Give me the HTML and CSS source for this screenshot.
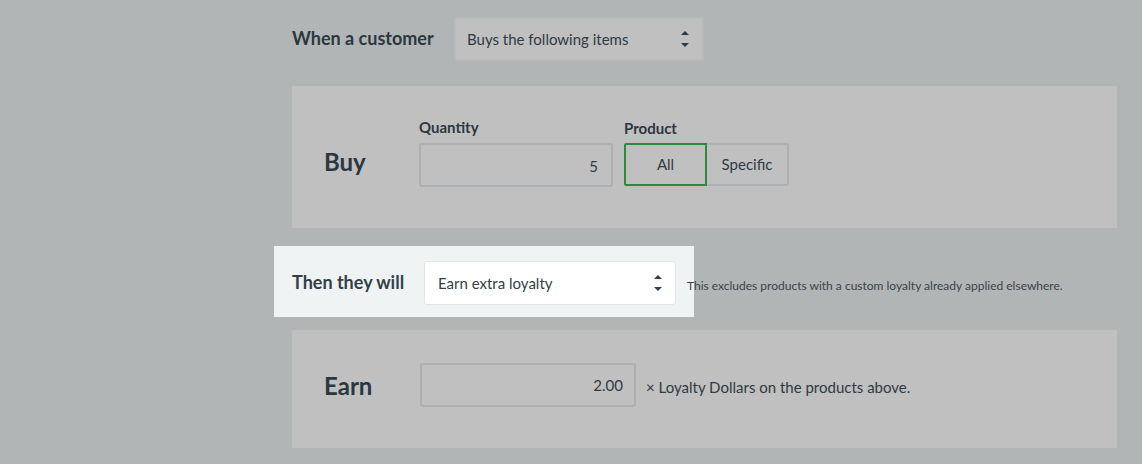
FILE: index.html
```html
<!DOCTYPE html>
<html>
<head>
<meta charset="utf-8">
<link rel="stylesheet" href="styles.css">
</head>
<body>
<div class="page">
  <div class="sidebar"></div>
  <div class="content">
    <div class="row row-when">
      <div class="row-label">When a customer</div>
      <div class="select select-dim select-when">
        <span>Buys the following items</span>
        <svg class="arrows" width="10" height="20" viewBox="0 0 10 20"><path d="M1 6 L5 2 L9 6 Z M1 14 L9 14 L5 18 Z" fill="currentColor"/></svg>
      </div>
    </div>

    <div class="panel panel-buy">
      <div class="panel-title">Buy</div>
      <div class="field field-qty">
        <div class="field-label">Quantity</div>
        <div class="input input-qty">5</div>
      </div>
      <div class="field">
        <div class="field-label">Product</div>
        <div class="toggle">
          <div class="toggle-btn active">All</div>
          <div class="toggle-btn">Specific</div>
        </div>
      </div>
    </div>

    <div class="row row-then">
      <div class="highlight"></div>
      <div class="row-label">Then they will</div>
      <div class="select select-white">
        <span>Earn extra loyalty</span>
        <svg class="arrows" width="10" height="20" viewBox="0 0 10 20"><path d="M1 6 L5 2 L9 6 Z M1 14 L9 14 L5 18 Z" fill="currentColor"/></svg>
      </div>
      <div class="help">This excludes products with a custom loyalty already applied elsewhere.</div>
    </div>

    <div class="panel panel-earn">
      <div class="panel-title">Earn</div>
      <div class="input input-earn">2.00</div>
      <div class="suffix">× Loyalty Dollars on the products above.</div>
    </div>
  </div>
</div>
</body>
</html>
```

FILE: styles.css
```css
html, body {
  margin: 0;
  padding: 0;
  background: #b1b5b6;
  font-family: Lato, "Noto Sans", sans-serif;
  color: #2d3a42;
}
.page {
  display: flex;
  height: 464px;
  overflow: hidden;
}
.sidebar {
  width: 292px;
  flex: none;
}
.content {
  width: 825px;
  padding-top: 17px;
  display: flex;
  flex-direction: column;
}
.row {
  display: flex;
  align-items: center;
  height: 44px;
}
.row-label {
  font-size: 18px;
  font-weight: 700;
  color: #2b3840;
  padding-bottom: 2px;
}
.row-when .row-label {
  width: 162px;
}
.select {
  box-sizing: border-box;
  height: 44px;
  border-radius: 3px;
  display: flex;
  align-items: center;
  justify-content: space-between;
  padding: 0 12px 0 11px;
  font-size: 15px;
}
.select-dim {
  background: #c0c0c0;
  border: 2px solid #b8babb;
}
.select-when {
  width: 250px;
  color: #2f3a42;
}
.arrows {
  color: #2d3a42;
}
.panel {
  background: #c0c0c0;
  display: flex;
  align-items: center;
}
.panel-buy {
  margin-top: 25px;
  height: 142px;
  box-sizing: border-box;
  padding: 0 0 8px 32px;
}
.panel-buy .panel-title {
  margin-top: 17px;
}
.panel-title {
  font-size: 24px;
  font-weight: 700;
  color: #2b3840;
  width: 95px;
}
.field {
  display: flex;
  flex-direction: column;
}
.field-qty {
  margin-right: 11px;
}
.field-label {
  font-size: 15px;
  font-weight: 700;
  color: #2b3840;
  line-height: 17px;
  margin-bottom: 7px;
}
.input {
  box-sizing: border-box;
  height: 44px;
  border: 2px solid #adb1b3;
  border-radius: 3px;
  display: flex;
  align-items: center;
  justify-content: flex-end;
  padding: 0 13px;
  font-size: 15px;
  color: #2f3a42;
}
.input-qty {
  width: 194px;
  padding-top: 2px;
}
.toggle {
  display: flex;
  height: 43px;
  margin-bottom: 1px;
  margin-top: -1px;
}
.toggle-btn {
  box-sizing: border-box;
  width: 82px;
  display: flex;
  align-items: center;
  justify-content: center;
  border: 2px solid #adb1b3;
  border-left: none;
  border-radius: 0 3px 3px 0;
  font-size: 15px;
  color: #2f3a42;
}
.toggle-btn.active {
  width: 83px;
  border: 2px solid #2e8a3c;
  border-radius: 2px 0 0 2px;
}
.row-then {
  position: relative;
  margin-top: 33px;
  z-index: 0;
}
.highlight {
  position: absolute;
  left: -18px;
  top: -15px;
  width: 420px;
  height: 71px;
  background: #eff3f4;
  z-index: -1;
}
.row-then .row-label {
  width: 132px;
  color: #333f48;
}
.select-white {
  width: 252px;
  background: #ffffff;
  border: 1px solid #e3e7e9;
  color: #333f48;
  font-size: 15px;
  padding: 0 12px 0 13px;
}
.row-then .arrows {
  color: #333f48;
}
.help {
  margin-left: 11px;
  font-size: 12px;
  color: #3b4449;
  padding-top: 4px;
}
.panel-earn {
  margin-top: 25px;
  height: 118px;
  box-sizing: border-box;
  padding: 0 0 8px 32px;
}
.panel-earn .panel-title {
  width: 96px;
}
.input-earn {
  width: 216px;
  padding-bottom: 1px;
  padding-right: 11px;
}
.suffix {
  margin-left: 10px;
  font-size: 15px;
  color: #2f3a42;
  padding-top: 4px;
}
```
